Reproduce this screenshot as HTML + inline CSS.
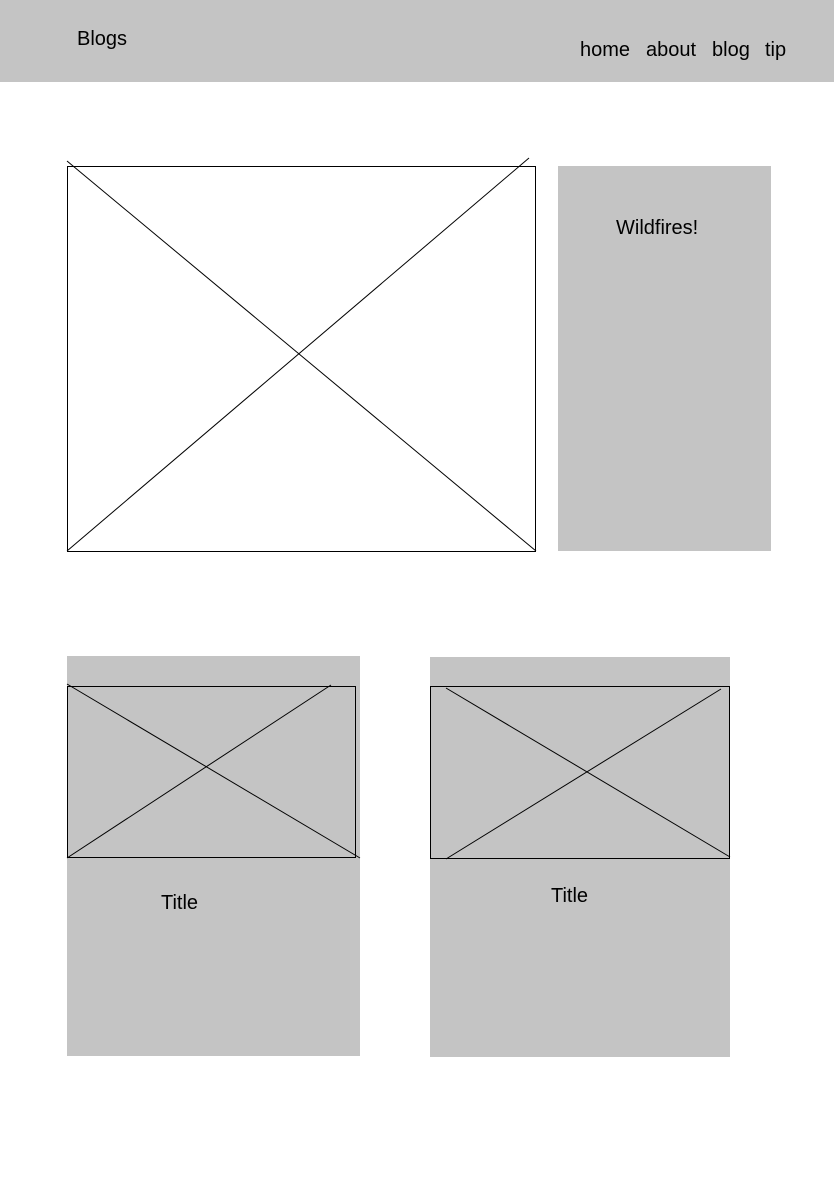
<!DOCTYPE html>
<html><head><meta charset="utf-8"><style>
body{margin:0;width:834px;height:1194px;background:#fff;position:relative;overflow:hidden;font-family:"Liberation Sans",sans-serif;color:#000}
.t{position:absolute;font-size:20px;line-height:20px;white-space:nowrap}
.g{position:absolute;background:#c4c4c4}
svg{position:absolute;left:0;top:0}
</style></head><body>
<div class="g" style="left:0;top:0;width:834px;height:82px"></div>
<div class="t" style="left:77px;top:29px">Blogs</div>
<div class="t" style="left:580px;top:40px">home</div>
<div class="t" style="left:646px;top:40px">about</div>
<div class="t" style="left:712px;top:40px">blog</div>
<div class="t" style="left:765px;top:40px">tip</div>
<div class="g" style="left:558px;top:166px;width:213px;height:385px"></div>
<div class="t" style="left:616px;top:218px">Wildfires!</div>
<div class="g" style="left:67px;top:656px;width:293px;height:400px"></div>
<div class="g" style="left:430px;top:657px;width:300px;height:400px"></div>
<div class="t" style="left:161px;top:893px">Title</div>
<div class="t" style="left:551px;top:886px">Title</div>
<svg width="834" height="1194" fill="none" stroke="#000" stroke-width="1">
<rect x="67.5" y="166.5" width="468" height="385"/>
<line x1="67" y1="161" x2="536" y2="551"/>
<line x1="67" y1="551" x2="529" y2="158"/>
<rect x="67.5" y="686.5" width="288" height="171"/>
<line x1="67" y1="684" x2="360" y2="858"/>
<line x1="67" y1="858" x2="331" y2="685"/>
<rect x="430.5" y="686.5" width="299" height="172"/>
<line x1="446" y1="688" x2="730" y2="857"/>
<line x1="446" y1="859" x2="721" y2="689"/>
</svg>
</body></html>
